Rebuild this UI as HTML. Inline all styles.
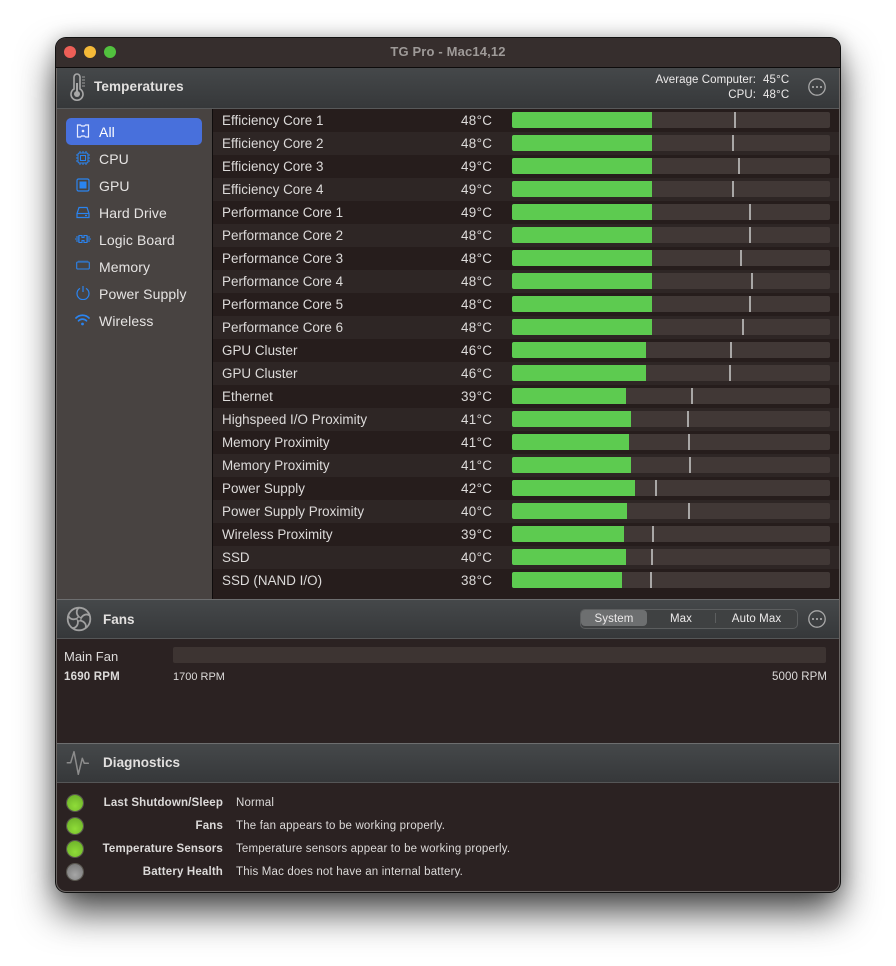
<!DOCTYPE html>
<html><head><meta charset="utf-8"><title>TG Pro - Mac14,12</title>
<style>
html,body{margin:0;padding:0;background:#fff}
body{width:896px;height:966px;position:relative;overflow:hidden;font-family:"Liberation Sans",sans-serif;color:#e0dedd}
#w{position:absolute;left:56px;top:38px;width:784px;height:854px;background:#2b2222;border-radius:10px;box-shadow:0 0 0 1px #111,inset 0 0 0 1px #6a6563,0 20px 38px rgba(0,0,0,.72),0 0 18px rgba(0,0,0,.22);overflow:hidden}
.a{position:absolute}
.t{position:absolute;white-space:nowrap;line-height:16px}
.hd{position:absolute;left:1px;width:782px;background:linear-gradient(#45484a,#36383a)}
.r{position:absolute;left:157px;width:626px;height:23px}
.r span{position:absolute;white-space:nowrap;line-height:23px;font-size:13.4px;color:#dddbda;letter-spacing:.03px}
.r .n{left:9px}.r .v{left:248px;letter-spacing:.35px}
.tr{position:absolute;left:299px;top:3px;width:318px;height:16px;background:#413836;border-radius:2px}
.g{position:absolute;left:0;top:0;height:16px;background:#5dcb50;border-radius:2px 0 0 2px}
.m{position:absolute;top:0;width:2px;height:16px;background:#a9a7a6}
.sb{position:absolute;left:43px;font-size:14px;line-height:18px;color:#e6e4e3;white-space:nowrap;letter-spacing:.1px}
.ic{position:absolute;left:19px}
.dg{position:absolute;left:11px;width:16px;height:16px;border-radius:50%;background:radial-gradient(circle at 50% 68%,#8fdc38,#6cb02a 90%);box-shadow:0 0 0 1px rgba(110,110,100,.7)}
.lb{position:absolute;right:617px;font-size:11.5px;font-weight:bold;color:#dcdad9;line-height:16px;white-space:nowrap;letter-spacing:.16px}
.ds{position:absolute;left:180px;font-size:11.5px;color:#dcdad9;line-height:16px;white-space:nowrap;letter-spacing:.17px}
</style></head><body>
<div id="w">
<!-- title bar -->
<div class="a" style="left:0;top:0;width:784px;height:29px;background:#362e2d;border-bottom:1px solid #0d0b0b"></div>
<div class="a" style="left:8px;top:8px;width:12px;height:12px;border-radius:50%;background:#ee5f57"></div>
<div class="a" style="left:28px;top:8px;width:12px;height:12px;border-radius:50%;background:#f5b938"></div>
<div class="a" style="left:48px;top:8px;width:12px;height:12px;border-radius:50%;background:#52c13e"></div>
<div class="t" style="left:0;width:784px;top:6px;text-align:center;font-size:13px;font-weight:bold;color:#9e9a98;letter-spacing:.15px">TG Pro - Mac14,12</div>
<!-- temperatures header -->
<div class="hd" style="top:30px;height:40px;border-bottom:1px solid #58595a"></div>
<svg class="a" style="left:12px;top:35px" width="20" height="28" viewBox="0 0 20 28" fill="none" stroke="#a8a8a8"><path d="M6 4a3 3 0 0 1 6 0v12a6 6 0 1 1-6 0z" stroke-width="1.6"/><circle cx="9" cy="21" r="3" fill="#a8a8a8" stroke="none"/><path d="M9 10v10" stroke-width="2"/><path d="M14 4h3M14 7h3M14 10h3M14 13h3" stroke-width="1.2" stroke="#8a8a8a"/></svg>
<div class="t" style="left:38px;top:41px;font-size:13.5px;font-weight:bold;color:#e2e0df;letter-spacing:.12px">Temperatures</div>
<div class="t" style="right:84px;top:34px;font-size:11.5px;color:#eceaea;letter-spacing:.06px">Average Computer:</div>
<div class="t" style="left:707px;top:34px;font-size:11.5px;color:#eceaea;letter-spacing:.15px">45°C</div>
<div class="t" style="right:84px;top:49px;font-size:11.5px;color:#eceaea;letter-spacing:.06px">CPU:</div>
<div class="t" style="left:707px;top:49px;font-size:11.5px;color:#eceaea;letter-spacing:.15px">48°C</div>
<svg class="a" style="left:751px;top:39px" width="20" height="20" viewBox="0 0 20 20" fill="none"><circle cx="10" cy="10" r="8.2" stroke="#a8a8a8" stroke-width="1.3"/><circle cx="6" cy="10" r="1" fill="#b8b8b8"/><circle cx="10" cy="10" r="1" fill="#b8b8b8"/><circle cx="14" cy="10" r="1" fill="#b8b8b8"/></svg>
<!-- sidebar -->
<div class="a" style="left:1px;top:71px;width:155px;height:490px;background:#484341;border-right:1px solid #0f0c0c"></div>
<div class="a" style="left:10px;top:80px;width:136px;height:27px;background:#4870dc;border-radius:5px"></div>
<svg class="ic" style="top:86px;left:20px" width="14" height="14" viewBox="0 0 14 14" fill="none" stroke="#e8ecff" stroke-width="1.2"><path d="M1.5 1h3l1 1h3l1-1h3v12h-3l-1-1h-3l-1 1h-3z"/><circle cx="7" cy="7" r="1.3" fill="#e8ecff" stroke="none"/></svg>
<div class="sb" style="top:85px;color:#fff">All</div>
<svg class="ic" style="top:113px;left:20px" width="14" height="14" viewBox="0 0 14 14" fill="none" stroke="#2a84f0" stroke-width="1"><rect x="2" y="2" width="10" height="10" rx="1.5"/><rect x="4.5" y="4.5" width="5" height="5"/><path d="M4 0v2M7 0v2M10 0v2M4 12v2M7 12v2M10 12v2M0 4h2M0 7h2M0 10h2M12 4h2M12 7h2M12 10h2"/></svg>
<div class="sb" style="top:112px">CPU</div>
<svg class="ic" style="top:140px;left:20px" width="14" height="14" viewBox="0 0 14 14" fill="none" stroke="#2a84f0" stroke-width="1.2"><rect x="1" y="1" width="12" height="12" rx="1.5"/><rect x="3.5" y="3.5" width="7" height="7" fill="#2a84f0" stroke="none"/></svg>
<div class="sb" style="top:139px">GPU</div>
<svg class="ic" style="top:168px;left:20px" width="14" height="13" viewBox="0 0 14 13" fill="none" stroke="#2a84f0" stroke-width="1.2"><path d="M3 1.500h8l2 6v4H1v-4z"/><path d="M1 7.500h12"/><path d="M9 9.500h2"/></svg>
<div class="sb" style="top:166px">Hard Drive</div>
<svg class="ic" style="top:195px;left:19px" width="16" height="12" viewBox="0 0 16 12" fill="none" stroke="#2a84f0" stroke-width="1.1"><path d="M4 2.500h3v2h2v-2h3v7H9v-2H7v2H4z"/><path d="M4 4H1M4 6H0M4 8H1M12 4h3M12 6h4M12 8h3"/></svg>
<div class="sb" style="top:193px">Logic Board</div>
<svg class="ic" style="top:222px;left:20px" width="14" height="11" viewBox="0 0 14 11" fill="none" stroke="#2a84f0" stroke-width="1.1"><rect x=".7" y="2" width="12.6" height="7" rx="1"/><path d="M3 .5V2M5 .5V2M7 .5V2M9 .5V2M11 .5V2" stroke-width=".8"/></svg>
<div class="sb" style="top:220px">Memory</div>
<svg class="ic" style="top:248px;left:20px" width="14" height="14" viewBox="0 0 14 14" fill="none" stroke="#2a84f0" stroke-width="1.2"><path d="M4 2.400a6 6 0 1 0 6 0"/><path d="M7 0v6"/></svg>
<div class="sb" style="top:247px">Power Supply</div>
<svg class="ic" style="top:276px;left:19px" width="15" height="12" viewBox="0 0 15 12" fill="none" stroke="#2a84f0" stroke-width="1.7" stroke-linecap="round"><path d="M1 4a9 9 0 0 1 13 0"/><path d="M3.500 6.800a5.600 5.600 0 0 1 8 0"/><circle cx="7.500" cy="10" r="1.400" fill="#2a84f0" stroke="none"/></svg>
<div class="sb" style="top:274px">Wireless</div>
<!-- list bg -->
<div class="a" style="left:157px;top:71px;width:626px;height:490px;background:#261d1c"></div>

<div class="r" style="top:71px;background:#261d1c"><span class="n">Efficiency Core 1</span><span class="v">48°C</span><div class="tr"><div class="g" style="width:140px"></div><div class="m" style="left:222px"></div></div></div>
<div class="r" style="top:94px;background:#2e2625"><span class="n">Efficiency Core 2</span><span class="v">48°C</span><div class="tr"><div class="g" style="width:140px"></div><div class="m" style="left:220px"></div></div></div>
<div class="r" style="top:117px;background:#261d1c"><span class="n">Efficiency Core 3</span><span class="v">49°C</span><div class="tr"><div class="g" style="width:140px"></div><div class="m" style="left:226px"></div></div></div>
<div class="r" style="top:140px;background:#2e2625"><span class="n">Efficiency Core 4</span><span class="v">49°C</span><div class="tr"><div class="g" style="width:140px"></div><div class="m" style="left:220px"></div></div></div>
<div class="r" style="top:163px;background:#261d1c"><span class="n">Performance Core 1</span><span class="v">49°C</span><div class="tr"><div class="g" style="width:140px"></div><div class="m" style="left:237px"></div></div></div>
<div class="r" style="top:186px;background:#2e2625"><span class="n">Performance Core 2</span><span class="v">48°C</span><div class="tr"><div class="g" style="width:140px"></div><div class="m" style="left:237px"></div></div></div>
<div class="r" style="top:209px;background:#261d1c"><span class="n">Performance Core 3</span><span class="v">48°C</span><div class="tr"><div class="g" style="width:140px"></div><div class="m" style="left:228px"></div></div></div>
<div class="r" style="top:232px;background:#2e2625"><span class="n">Performance Core 4</span><span class="v">48°C</span><div class="tr"><div class="g" style="width:140px"></div><div class="m" style="left:239px"></div></div></div>
<div class="r" style="top:255px;background:#261d1c"><span class="n">Performance Core 5</span><span class="v">48°C</span><div class="tr"><div class="g" style="width:140px"></div><div class="m" style="left:237px"></div></div></div>
<div class="r" style="top:278px;background:#2e2625"><span class="n">Performance Core 6</span><span class="v">48°C</span><div class="tr"><div class="g" style="width:140px"></div><div class="m" style="left:230px"></div></div></div>
<div class="r" style="top:301px;background:#261d1c"><span class="n">GPU Cluster</span><span class="v">46°C</span><div class="tr"><div class="g" style="width:134px"></div><div class="m" style="left:218px"></div></div></div>
<div class="r" style="top:324px;background:#2e2625"><span class="n">GPU Cluster</span><span class="v">46°C</span><div class="tr"><div class="g" style="width:134px"></div><div class="m" style="left:217px"></div></div></div>
<div class="r" style="top:347px;background:#261d1c"><span class="n">Ethernet</span><span class="v">39°C</span><div class="tr"><div class="g" style="width:114px"></div><div class="m" style="left:179px"></div></div></div>
<div class="r" style="top:370px;background:#2e2625"><span class="n">Highspeed I/O Proximity</span><span class="v">41°C</span><div class="tr"><div class="g" style="width:119px"></div><div class="m" style="left:175px"></div></div></div>
<div class="r" style="top:393px;background:#261d1c"><span class="n">Memory Proximity</span><span class="v">41°C</span><div class="tr"><div class="g" style="width:117px"></div><div class="m" style="left:176px"></div></div></div>
<div class="r" style="top:416px;background:#2e2625"><span class="n">Memory Proximity</span><span class="v">41°C</span><div class="tr"><div class="g" style="width:119px"></div><div class="m" style="left:177px"></div></div></div>
<div class="r" style="top:439px;background:#261d1c"><span class="n">Power Supply</span><span class="v">42°C</span><div class="tr"><div class="g" style="width:123px"></div><div class="m" style="left:143px"></div></div></div>
<div class="r" style="top:462px;background:#2e2625"><span class="n">Power Supply Proximity</span><span class="v">40°C</span><div class="tr"><div class="g" style="width:115px"></div><div class="m" style="left:176px"></div></div></div>
<div class="r" style="top:485px;background:#261d1c"><span class="n">Wireless Proximity</span><span class="v">39°C</span><div class="tr"><div class="g" style="width:112px"></div><div class="m" style="left:140px"></div></div></div>
<div class="r" style="top:508px;background:#2e2625"><span class="n">SSD</span><span class="v">40°C</span><div class="tr"><div class="g" style="width:114px"></div><div class="m" style="left:139px"></div></div></div>
<div class="r" style="top:531px;background:#261d1c"><span class="n">SSD (NAND I/O)</span><span class="v">38°C</span><div class="tr"><div class="g" style="width:110px"></div><div class="m" style="left:138px"></div></div></div>

<!-- fans -->
<div class="hd" style="top:561px;height:38px;border-top:1px solid #6d6e6f;border-bottom:1px solid #555657"></div>
<svg class="a" style="left:10px;top:568px" width="26" height="26" viewBox="0 0 26 26" fill="none" stroke="#a0a0a0" stroke-width="1.800"><circle cx="13" cy="13" r="11.300"/><circle cx="13" cy="13" r="2" stroke-width="1.200"/><path d="M13 11C10 8 10 4 13 1.700"/><path d="M13 11C10 8 10 4 13 1.700" transform="rotate(72 13 13)"/><path d="M13 11C10 8 10 4 13 1.700" transform="rotate(144 13 13)"/><path d="M13 11C10 8 10 4 13 1.700" transform="rotate(216 13 13)"/><path d="M13 11C10 8 10 4 13 1.700" transform="rotate(288 13 13)"/></svg>
<div class="t" style="left:47px;top:574px;font-size:13.5px;font-weight:bold;color:#e2e0df">Fans</div>
<div class="a" style="left:524px;top:571px;width:216px;height:18px;background:#3f4142;border:1px solid #5c5e5f;border-radius:5px"></div>
<div class="a" style="left:525px;top:572px;width:66px;height:16px;background:#6d6f70;border-radius:4px"></div>
<div class="a" style="left:659px;top:575px;width:1px;height:10px;background:#5c5e5f"></div>
<div class="t" style="left:525px;width:66px;text-align:center;top:573px;font-size:11.5px;color:#eceaea;letter-spacing:.1px">System</div>
<div class="t" style="left:591px;width:68px;text-align:center;top:573px;font-size:11.5px;color:#eceaea;letter-spacing:.1px">Max</div>
<div class="t" style="left:660px;width:81px;text-align:center;top:573px;font-size:11.5px;color:#eceaea;letter-spacing:.1px">Auto Max</div>
<svg class="a" style="left:751px;top:571px" width="20" height="20" viewBox="0 0 20 20" fill="none"><circle cx="10" cy="10" r="8.200" stroke="#a8a8a8" stroke-width="1.300"/><circle cx="6" cy="10" r="1" fill="#b8b8b8"/><circle cx="10" cy="10" r="1" fill="#b8b8b8"/><circle cx="14" cy="10" r="1" fill="#b8b8b8"/></svg>
<div class="t" style="left:8px;top:611px;font-size:13px;color:#dddbda">Main Fan</div>
<div class="a" style="left:117px;top:609px;width:653px;height:16px;background:#3d3432;border-radius:2px"></div>
<div class="t" style="left:8px;top:631px;font-size:11.5px;font-weight:bold;color:#dcdad9;letter-spacing:.2px">1690 RPM</div>
<div class="t" style="left:117px;top:631px;font-size:11px;color:#dcdad9">1700 RPM</div>
<div class="t" style="right:13px;top:631px;font-size:11.5px;color:#dcdad9;letter-spacing:.08px">5000 RPM</div>

<!-- diagnostics -->
<div class="hd" style="top:705px;height:38px;border-top:1px solid #6d6e6f;border-bottom:1px solid #555657"></div>
<svg class="a" style="left:10px;top:712px" width="24" height="26" viewBox="0 0 24 26" fill="none" stroke="#8c8c8c" stroke-width="1.500" stroke-linejoin="round" stroke-linecap="round"><path d="M1.300 12.700H4.700L8 1.700L12.300 24.300L16.300 8.300L18.300 13.300H22.300"/></svg>
<div class="t" style="left:47px;top:717px;font-size:13.5px;font-weight:bold;color:#e2e0df;letter-spacing:.05px">Diagnostics</div>

<div class="dg" style="top:757px"></div>
<div class="dg" style="top:780px"></div>
<div class="dg" style="top:803px"></div>
<div class="dg" style="top:826px;background:radial-gradient(circle at 50% 68%,#a6a6a6,#777 90%)"></div>
<div class="lb" style="top:757px">Last Shutdown/Sleep</div><div class="ds" style="top:757px">Normal</div>
<div class="lb" style="top:780px">Fans</div><div class="ds" style="top:780px">The fan appears to be working properly.</div>
<div class="lb" style="top:803px">Temperature Sensors</div><div class="ds" style="top:803px">Temperature sensors appear to be working properly.</div>
<div class="lb" style="top:826px">Battery Health</div><div class="ds" style="top:826px">This Mac does not have an internal battery.</div>
</div>
</body></html>
